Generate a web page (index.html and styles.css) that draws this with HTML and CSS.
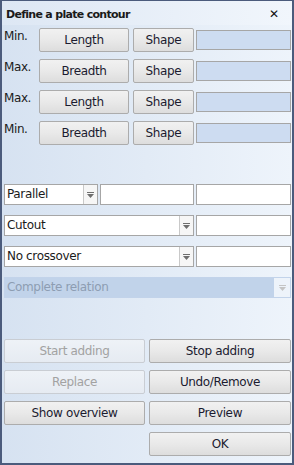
FILE: index.html
```html
<!DOCTYPE html>
<html>
<head>
<meta charset="utf-8">
<link rel="stylesheet" href="styles.css">
</head>
<body>
<div class="win">
  <div class="titlebar">
    <span class="title">Define a plate contour</span>
    <span class="close">✕</span>
  </div>
  <div class="content">
    <div class="dimrow">
      <span class="lbl">Min.</span>
      <button class="btn wide">Length</button>
      <button class="btn shape">Shape</button>
      <div class="field blue"></div>
    </div>
    <div class="dimrow">
      <span class="lbl">Max.</span>
      <button class="btn wide">Breadth</button>
      <button class="btn shape">Shape</button>
      <div class="field blue"></div>
    </div>
    <div class="dimrow">
      <span class="lbl">Max.</span>
      <button class="btn wide">Length</button>
      <button class="btn shape">Shape</button>
      <div class="field blue"></div>
    </div>
    <div class="dimrow">
      <span class="lbl">Min.</span>
      <button class="btn wide">Breadth</button>
      <button class="btn shape">Shape</button>
      <div class="field blue"></div>
    </div>

    <div class="selrow first">
      <div class="combo small"><span class="ctext">Parallel</span><span class="arrow"><svg width="7" height="6" viewBox="0 0 7 6"><rect x="0" y="0" width="7" height="1" fill="#6e6e6e"/><path d="M0 2 H7 L3.5 6 Z" fill="#6e6e6e"/></svg></span></div>
      <div class="field white mid"></div>
      <div class="field white right"></div>
    </div>
    <div class="selrow">
      <div class="combo big"><span class="ctext">Cutout</span><span class="arrow"><svg width="7" height="6" viewBox="0 0 7 6"><rect x="0" y="0" width="7" height="1" fill="#6e6e6e"/><path d="M0 2 H7 L3.5 6 Z" fill="#6e6e6e"/></svg></span></div>
      <div class="field white right"></div>
    </div>
    <div class="selrow">
      <div class="combo big"><span class="ctext">No crossover</span><span class="arrow"><svg width="7" height="6" viewBox="0 0 7 6"><rect x="0" y="0" width="7" height="1" fill="#6e6e6e"/><path d="M0 2 H7 L3.5 6 Z" fill="#6e6e6e"/></svg></span></div>
      <div class="field white right"></div>
    </div>
    <div class="selrow">
      <div class="combo full disabled"><span class="ctext">Complete relation</span><span class="arrow"><svg width="7" height="6" viewBox="0 0 7 6"><rect x="0" y="0" width="7" height="1" fill="#c4c4c4"/><path d="M0 2 H7 L3.5 6 Z" fill="#c4c4c4"/></svg></span></div>
    </div>

    <div class="actions">
      <button class="btn act dis">Start adding</button>
      <button class="btn act">Stop adding</button>
      <button class="btn act dis">Replace</button>
      <button class="btn act">Undo/Remove</button>
      <button class="btn act">Show overview</button>
      <button class="btn act">Preview</button>
      <span></span>
      <button class="btn act">OK</button>
    </div>
  </div>
</div>
</body>
</html>
```

FILE: styles.css
```css
* { box-sizing: border-box; }
html, body { margin: 0; padding: 0; }
body {
  width: 294px;
  height: 465px;
  font-family: "DejaVu Sans", Verdana, sans-serif;
  font-size: 12px;
  color: #1b1b1b;
  background: #4b5b7c;
}
.win {
  width: 294px;
  height: 465px;
  border: 2px solid #4b5b7c;
  border-top-width: 1px;
  background: linear-gradient(to right, #d6e2f1 0%, #e2ebf6 50%, #eef4fb 100%);
  display: flex;
  flex-direction: column;
}
.titlebar {
  height: 24px;
  display: flex;
  align-items: center;
  justify-content: space-between;
  padding: 2px 13px 0 4px;
  background: linear-gradient(to right, #dde7f4, #f1f6fc);
}
.title {
  font-weight: bold;
  font-size: 11px;
  letter-spacing: -0.7px;
  color: #1a1a1a;
}
.close {
  font-size: 12px;
  font-weight: bold;
  color: #111;
}
.content {
  flex: 1;
  padding: 3px 1px 0 2px;
  display: flex;
  flex-direction: column;
}
.dimrow {
  display: flex;
  align-items: center;
  height: 24px;
  margin-bottom: 7px;
}
.lbl {
  width: 35px;
  align-self: flex-start;
  padding-top: 1px;
  letter-spacing: -0.4px;
}
.btn {
  font-family: inherit;
  font-size: 12px;
  letter-spacing: -0.35px;
  color: #1b1b30;
  height: 24px;
  border: 1px solid #acacac;
  border-radius: 2px;
  background: linear-gradient(to bottom, #f1f1f1 0%, #e9e9e9 50%, #dddddd 100%);
  padding: 0;
  margin: 0;
}
.wide { width: 90px; }
.shape { width: 61px; margin-left: 4px; }
.field {
  height: 21px;
  border: 1px solid #a6a6a6;
}
.field.blue {
  width: 95px;
  margin-left: 2px;
  background: #cddcf1;
  height: 20px;
}
.field.white { background: #fff; }
.field.mid { width: 94px; margin-left: 2px; }
.field.right { width: 95px; margin-left: 2px; }
.selrow {
  display: flex;
  height: 21px;
  margin-bottom: 10px;
}
.selrow.first { margin-top: 32px; }
.combo {
  height: 21px;
  border: 1px solid #a6a6a6;
  background: #fff;
  display: flex;
  align-items: stretch;
}
.combo.small { width: 94px; }
.combo.big { width: 190px; }
.combo.full { width: 287px; }
.ctext {
  flex: 1;
  padding-left: 2px;
  line-height: 19px;
  letter-spacing: -0.35px;
  white-space: nowrap;
  overflow: hidden;
}
.arrow {
  width: 14px;
  border-left: 1px solid #c9c9c9;
  background: #f6f6f6;
  display: flex;
  align-items: center;
  justify-content: center;
}
.combo.disabled {
  border-color: #c2d3ea;
  background: #c1d3ea;
  color: #8d9db2;
}
.combo.disabled .arrow {
  background: #edf3fa;
  border-left: none;
  width: 16px;
}
.actions {
  margin-top: 31px;
  display: grid;
  grid-template-columns: 141px 142px;
  column-gap: 4px;
  row-gap: 7px;
}
.btn.act { width: 100%; height: 24px; }
.btn.dis {
  background: linear-gradient(to bottom, #eef2f7, #e6ebf2);
  border-color: #c9cdd3;
  color: #a2a2a2;
}
```
